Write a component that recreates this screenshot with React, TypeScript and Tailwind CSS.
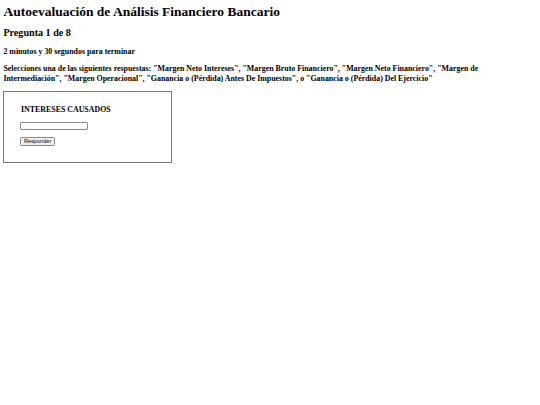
import React, { useState } from 'react';

const OPTIONS = [
  'Margen Neto Intereses',
  'Margen Bruto Financiero',
  'Margen Neto Financiero',
  'Margen de Intermediación',
  'Margen Operacional',
  'Ganancia o (Pérdida) Antes De Impuestos',
];
const LAST = 'Ganancia o (Pérdida) Del Ejercicio';

export default function App() {
  const [answer, setAnswer] = useState('');

  const optionText =
    OPTIONS.map((o) => `"${o}"`).join(', ') + `, o "${LAST}"`;

  return (
    <div className="min-h-screen bg-white px-[3.4px] pt-[4px] font-['Liberation_Serif',serif] text-black">
      <h1 className="text-[13.5px] font-bold leading-[15px]">
        Autoevaluación de Análisis Financiero Bancario
      </h1>
      <h2 className="mt-[8.3px] text-[10.125px] font-bold leading-[12px]">Pregunta 1 de 8</h2>
      <h4 className="mt-[7.8px] text-[7.9px] font-bold leading-[9px]">
        2 minutos y 30 segundos para terminar
      </h4>
      <p className="mt-[8.2px] text-[7.9px] font-bold leading-[10px]">
        Selecciones una de las siguientes respuestas: {optionText}
      </p>

      <form
        onSubmit={(e) => e.preventDefault()}
        className="mt-[6.7px] flex h-[72px] w-[169px] flex-col items-start border border-[#7a7a7a] pl-[16px] pt-[13px]"
      >
        <h3 className="pl-[0.6px] text-[7.9px] font-bold leading-[9px]">INTERESES CAUSADOS</h3>
        <input
          type="text"
          value={answer}
          onChange={(e) => setAnswer(e.target.value)}
          className="mt-[8px] h-[8px] w-[68px] rounded-[1px] border border-[#8a8a8a] bg-white"
        />
        <button
          type="submit"
          className="mt-[7px] h-[9px] rounded-[1.5px] border border-[#8a8a8a] bg-[#efefef] px-[2.5px] font-['Liberation_Sans',Arial,sans-serif] text-[5.6px] leading-[7px] text-black"
        >
          Responder
        </button>
      </form>
    </div>
  );
}
